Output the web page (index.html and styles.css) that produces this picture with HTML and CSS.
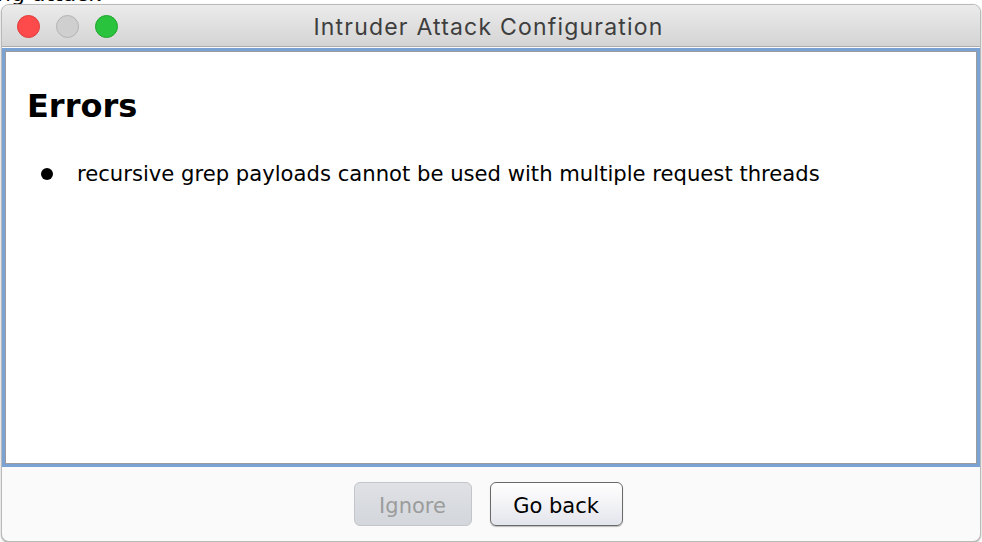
FILE: index.html
```html
<!DOCTYPE html>
<html>
<head>
<meta charset="utf-8">
<link rel="stylesheet" href="styles.css">
</head>
<body>
<div class="desktop">
  <div class="behind"><span>ng attack</span></div>
  <div class="window">
    <div class="titlebar">
      <div class="lights">
        <span class="light red"></span>
        <span class="light gray"></span>
        <span class="light green"></span>
      </div>
      <div class="title">Intruder Attack Configuration</div>
    </div>
    <div class="panel">
      <h1 class="heading">Errors</h1>
      <ul class="errors">
        <li class="error"><span class="dot"></span><span class="msg">recursive grep payloads cannot be used with multiple request threads</span></li>
      </ul>
    </div>
    <div class="actions">
      <button class="btn disabled" disabled>Ignore</button>
      <button class="btn primary">Go back</button>
    </div>
  </div>
</div>
</body>
</html>
```
FILE: styles.css
```css
html, body {
  margin: 0;
  padding: 0;
  background: #ffffff;
}
.desktop {
  width: 982px;
  height: 542px;
  position: relative;
  overflow: hidden;
}
.behind {
  height: 4px;
  overflow: hidden;
  font-family: "DejaVu Sans", sans-serif;
  font-size: 22px;
  line-height: 22px;
  color: #000;
}
.behind span {
  display: block;
  margin-top: -17px;
  margin-left: -3px;
}
.window {
  margin: 0 1px 0 1px;
  height: 536px;
  border: 1px solid #b9b9b9;
  border-radius: 8px;
  background: #fafafa;
  display: flex;
  flex-direction: column;
  overflow: hidden;
  box-shadow: 0 1px 2px rgba(0,0,0,0.35);
}
.titlebar {
  height: 41px;
  flex: none;
  display: flex;
  align-items: center;
  background: linear-gradient(#ebebeb, #d4d4d4);
  border-bottom: 1px solid #adadad;
  position: relative;
}
.lights {
  display: flex;
  gap: 16px;
  padding-left: 15px;
  padding-top: 2px;
}
.light {
  width: 23px;
  height: 23px;
  border-radius: 50%;
  box-sizing: border-box;
}
.red { background: #fc4b4a; border: 1px solid #e0393a; }
.gray { background: #cfcfcf; border: 1px solid #b3b3b3; }
.green { background: #2ac33e; border: 1px solid #1ea52d; }
.title {
  position: absolute;
  left: 0;
  right: 0;
  top: 0;
  bottom: 0;
  display: flex;
  align-items: center;
  justify-content: center;
  font-family: "Inter", "Liberation Sans", sans-serif;
  font-size: 23px;
  letter-spacing: 1.2px;
  color: #3e3e3e;
  padding-top: 2px;
  padding-right: 5px;
}
.panel {
  flex: none;
  margin-top: 1px;
  height: 419px;
  box-sizing: border-box;
  border: 3px solid #7aa3d3;
  box-shadow: inset 0 0 0 1px #9c9c9c;
  background: #ffffff;
  padding: 0 22px;
  font-family: "DejaVu Sans", sans-serif;
}
.heading {
  margin: 0;
  padding-top: 36px;
  font-size: 32px;
  line-height: 38px;
  font-weight: bold;
  color: #000;
}
.errors {
  list-style: none;
  margin: 0;
  padding: 36px 0 0 14px;
}
.error {
  display: flex;
  align-items: center;
  gap: 24px;
  font-size: 21.15px;
  line-height: 26px;
  color: #000;
}
.dot {
  width: 12px;
  height: 12px;
  border-radius: 50%;
  background: #000;
  flex: none;
}
.actions {
  flex: 1;
  display: flex;
  justify-content: center;
  align-items: flex-start;
  gap: 18px;
  padding-top: 15px;
  padding-right: 6px;
}
.btn {
  height: 44px;
  box-sizing: border-box;
  border-radius: 6px;
  font-family: "DejaVu Sans", sans-serif;
  font-size: 21px;
  padding: 3px 0 0 0;
}
.disabled {
  width: 118px;
  background: linear-gradient(#dfe1e5, #d3d6db);
  border: 1px solid #c2c5c9;
  color: #9c9c9c;
}
.primary {
  width: 133px;
  background: linear-gradient(#ffffff, #f4f4f7 45%, #e3e5ec);
  border: 1px solid #6a6a6a;
  color: #000;
  box-shadow: 0 1px 1px rgba(0,0,0,0.25);
}
```
